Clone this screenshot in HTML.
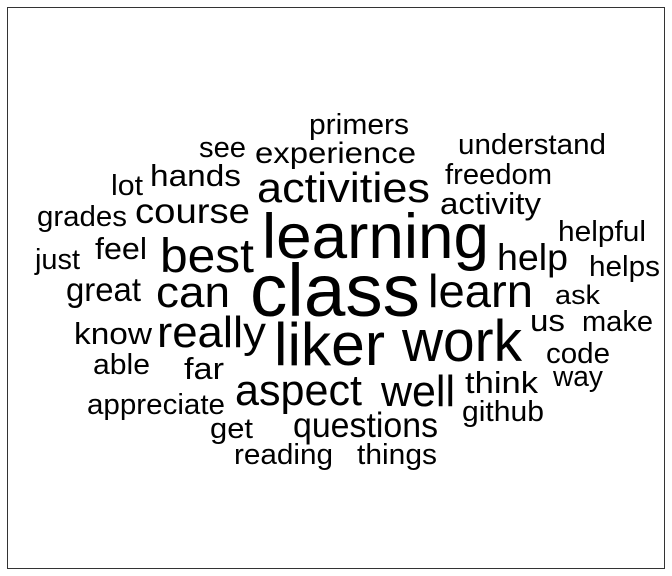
<!DOCTYPE html>
<html><head><meta charset="utf-8"><style>
html,body{margin:0;padding:0;background:#fff;width:672px;height:576px;overflow:hidden}
svg{display:block}
text{font-family:"Liberation Sans",Arial,sans-serif;fill:#000}
</style></head><body>
<svg width="672" height="576" viewBox="0 0 672 576">
<rect x="7.5" y="7.5" width="657" height="561" fill="none" stroke="#333" stroke-width="1"/>
<g>
<text x="309" y="134" font-size="29" textLength="100" lengthAdjust="spacingAndGlyphs">primers</text>
<text x="458" y="154" font-size="29" textLength="148" lengthAdjust="spacingAndGlyphs">understand</text>
<text x="199" y="157" font-size="29" textLength="47" lengthAdjust="spacingAndGlyphs">see</text>
<text x="255" y="163" font-size="30" textLength="161" lengthAdjust="spacingAndGlyphs">experience</text>
<text x="445" y="184" font-size="29" textLength="107" lengthAdjust="spacingAndGlyphs">freedom</text>
<text x="150" y="186" font-size="31" textLength="91" lengthAdjust="spacingAndGlyphs">hands</text>
<text x="111" y="195" font-size="29" textLength="32" lengthAdjust="spacingAndGlyphs">lot</text>
<text x="257" y="202" font-size="42" textLength="173" lengthAdjust="spacingAndGlyphs">activities</text>
<text x="440" y="214" font-size="31" textLength="101" lengthAdjust="spacingAndGlyphs">activity</text>
<text x="37" y="226" font-size="29" textLength="90" lengthAdjust="spacingAndGlyphs">grades</text>
<text x="135" y="223" font-size="35" textLength="115" lengthAdjust="spacingAndGlyphs">course</text>
<text x="262" y="258" font-size="63" textLength="227" lengthAdjust="spacingAndGlyphs">learning</text>
<text x="558" y="241" font-size="29" textLength="88" lengthAdjust="spacingAndGlyphs">helpful</text>
<text x="95" y="259" font-size="31" textLength="52" lengthAdjust="spacingAndGlyphs">feel</text>
<text x="160" y="272" font-size="48" textLength="94" lengthAdjust="spacingAndGlyphs">best</text>
<text x="35" y="269" font-size="29" textLength="45" lengthAdjust="spacingAndGlyphs">just</text>
<text x="497" y="270" font-size="37" textLength="71" lengthAdjust="spacingAndGlyphs">help</text>
<text x="589" y="276" font-size="29" textLength="71" lengthAdjust="spacingAndGlyphs">helps</text>
<text x="250" y="316" font-size="74" textLength="170" lengthAdjust="spacingAndGlyphs">class</text>
<text x="428" y="307" font-size="46" textLength="105" lengthAdjust="spacingAndGlyphs">learn</text>
<text x="66" y="301" font-size="33" textLength="75" lengthAdjust="spacingAndGlyphs">great</text>
<text x="156" y="307" font-size="44" textLength="74" lengthAdjust="spacingAndGlyphs">can</text>
<text x="555" y="304" font-size="27" textLength="45" lengthAdjust="spacingAndGlyphs">ask</text>
<text x="530" y="331" font-size="31" textLength="35" lengthAdjust="spacingAndGlyphs">us</text>
<text x="582" y="331" font-size="29" textLength="71" lengthAdjust="spacingAndGlyphs">make</text>
<text x="74" y="344" font-size="31" textLength="78" lengthAdjust="spacingAndGlyphs">know</text>
<text x="157" y="347" font-size="44" textLength="109" lengthAdjust="spacingAndGlyphs">really</text>
<text x="274" y="365" font-size="60" textLength="111" lengthAdjust="spacingAndGlyphs">liker</text>
<text x="402" y="361" font-size="58" textLength="120" lengthAdjust="spacingAndGlyphs">work</text>
<text x="546" y="363" font-size="29" textLength="64" lengthAdjust="spacingAndGlyphs">code</text>
<text x="93" y="374" font-size="29" textLength="57" lengthAdjust="spacingAndGlyphs">able</text>
<text x="184" y="379" font-size="31" textLength="40" lengthAdjust="spacingAndGlyphs">far</text>
<text x="553" y="386" font-size="29" textLength="50" lengthAdjust="spacingAndGlyphs">way</text>
<text x="465" y="393" font-size="31" textLength="73" lengthAdjust="spacingAndGlyphs">think</text>
<text x="235" y="405" font-size="44" textLength="127" lengthAdjust="spacingAndGlyphs">aspect</text>
<text x="381" y="406" font-size="44" textLength="74" lengthAdjust="spacingAndGlyphs">well</text>
<text x="87" y="414" font-size="29" textLength="138" lengthAdjust="spacingAndGlyphs">appreciate</text>
<text x="462" y="421" font-size="29" textLength="82" lengthAdjust="spacingAndGlyphs">github</text>
<text x="293" y="437" font-size="35" textLength="145" lengthAdjust="spacingAndGlyphs">questions</text>
<text x="210" y="438" font-size="29" textLength="43" lengthAdjust="spacingAndGlyphs">get</text>
<text x="234" y="464" font-size="29" textLength="99" lengthAdjust="spacingAndGlyphs">reading</text>
<text x="357" y="464" font-size="29" textLength="80" lengthAdjust="spacingAndGlyphs">things</text>
</g>
</svg>
</body></html>
